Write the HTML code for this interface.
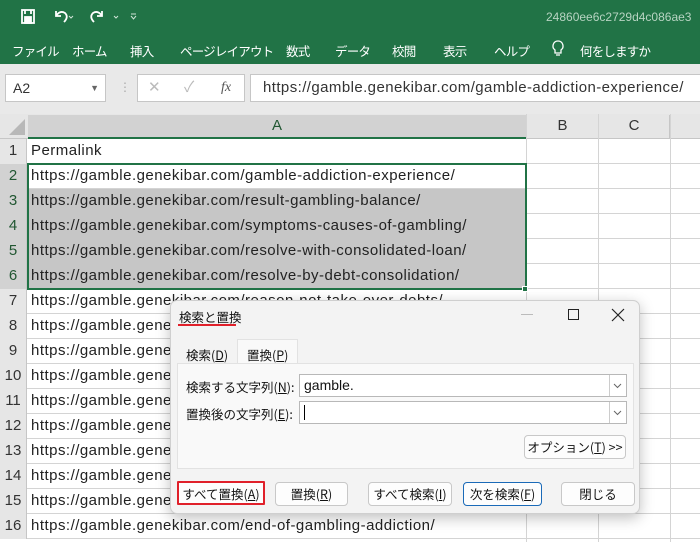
<!DOCTYPE html>
<html><head><meta charset="utf-8"><style>
*{margin:0;padding:0;box-sizing:border-box}
body{width:700px;height:542px;overflow:hidden;position:relative;background:#fff;font-family:"Liberation Sans","Noto Sans CJK JP",sans-serif}
.abs{position:absolute}
.menu span{position:absolute;top:41px;color:#fff;font-size:12.5px;letter-spacing:-0.8px;font-family:"Noto Sans CJK JP",sans-serif}
.row{position:absolute;left:0;width:700px;height:25px;border-bottom:1px solid #d4d4d4}
.rh{position:absolute;left:0;width:27px;height:25px;background:#e6e6e6;color:#333;font-size:15px;text-align:center;line-height:24px;border-right:1px solid #c6c6c6}
.cell{position:absolute;left:31px;top:0;font-size:15px;line-height:24px;color:#222;white-space:nowrap;letter-spacing:0.48px}
.vl{position:absolute;top:114px;width:1px;height:428px;background:#d4d4d4}
.btn{position:absolute;top:481px;height:24px;border:1px solid #c8c8c8;border-radius:4px;background:#fdfdfd;font-size:12.5px;text-align:center;line-height:22px;color:#111;font-family:"Noto Sans CJK JP",sans-serif}
.dlg{font-family:"Noto Sans CJK JP",sans-serif;color:#111}
</style></head><body>
<div class="abs" style="left:0;top:0;width:700px;height:64px;background:#217346"></div>
<svg class="abs" style="left:0;top:0" width="160" height="35">
<g stroke="#fff" fill="none" stroke-width="1.8">
<rect x="22" y="10" width="12" height="13"/><rect x="25" y="17" width="6" height="6" fill="#fff"/><line x1="25" y1="10" x2="25" y2="14"/><line x1="31" y1="10" x2="31" y2="14"/>
<path d="M56 11 v5 h5 M56 16 q4-6 9-3 q4 4 -1 9"/>
<path d="M102 11 v5 h-5 M102 16 q-4-6 -9-3 q-4 4 1 9"/>
</g>
<g stroke="#cfe3d6" fill="none" stroke-width="1"><path d="M69 16l2 2 2-2M114 16l2 2 2-2"/><path d="M131 14h5M131 16l2.5 3 2.5-3"/></g>
</svg>
<div class="abs" style="left:546px;top:10px;color:#b7d4c2;font-size:12px">24860ee6c2729d4c086ae3</div>
<div class="menu">
<span style="left:12px">ファイル</span><span style="left:72px">ホーム</span><span style="left:130px">挿入</span><span style="left:180px">ページレイアウト</span><span style="left:286px">数式</span><span style="left:335px">データ</span><span style="left:392px">校閲</span><span style="left:443px">表示</span><span style="left:494px">ヘルプ</span><span style="left:580px">何をしますか</span>
</div>
<svg class="abs" style="left:548px;top:38px" width="20" height="22"><path d="M10 3a5 5 0 0 0-3 9v3h6v-3a5 5 0 0 0-3-9zM8 17h4" stroke="#fff" fill="none" stroke-width="1.3"/></svg>
<div class="abs" style="left:0;top:64px;width:700px;height:50px;background:#e9e9e9"></div>
<div class="abs" style="left:5px;top:74px;width:101px;height:28px;background:#fff;border:1px solid #c6c6c6;font-size:14px;line-height:26px;padding-left:7px;color:#333">A2<span style="position:absolute;right:6px;top:0;font-size:9px;color:#666">▼</span></div>
<div class="abs" style="left:119px;top:80px;color:#aaa;font-size:12px">⋮</div>
<div class="abs" style="left:137px;top:74px;width:108px;height:28px;background:#fff;border:1px solid #c6c6c6;color:#bbb;font-size:15px;line-height:26px"><span style="position:absolute;left:10px">✕</span><span style="position:absolute;left:46px">✓</span><span style="position:absolute;left:83px;color:#555;font-style:italic;font-family:'Liberation Serif';font-size:14px">fx</span></div>
<div class="abs" style="left:250px;top:74px;width:460px;height:28px;background:#fff;border:1px solid #c6c6c6;font-size:15px;line-height:26px;padding-left:12px;color:#333;letter-spacing:0.42px;white-space:nowrap">https://gamble.genekibar.com/gamble-addiction-experience/</div>
<div class="abs" style="left:0;top:114px;width:700px;height:25px;background:#e6e6e6;border-bottom:1px solid #c6c6c6"></div>
<div class="abs" style="left:28px;top:115px;width:498px;height:24px;background:#d2d2d2;border-bottom:2px solid #217346;text-align:center;font-size:15px;line-height:22px;color:#215732">A</div>
<div class="abs" style="left:526px;top:115px;width:72px;height:23px;border-left:1px solid #c6c6c6;text-align:center;font-size:15px;line-height:22px;color:#333">B</div>
<div class="abs" style="left:598px;top:115px;width:72px;height:23px;border-left:1px solid #c6c6c6;border-right:1px solid #c6c6c6;text-align:center;font-size:15px;line-height:22px;color:#333">C</div>
<svg class="abs" style="left:8px;top:118px" width="18" height="18"><path d="M17 1V17H1Z" fill="#b8b8b8"/></svg>
<div class="vl" style="left:526px"></div><div class="vl" style="left:598px"></div><div class="vl" style="left:670px"></div>
<div class="row" style="top:139px"><div class="rh">1</div><div class="cell">Permalink</div></div>
<div class="row" style="top:164px"><div class="rh" style="background:#d2d2d2;color:#215732">2</div><div class="cell">https://gamble.genekibar.com/gamble-addiction-experience/</div></div>
<div class="row" style="top:189px"><div class="rh" style="background:#d2d2d2;color:#215732">3</div><div class="abs" style="left:28px;width:498px;height:25px;background:#c6c6c6"></div><div class="cell">https://gamble.genekibar.com/result-gambling-balance/</div></div>
<div class="row" style="top:214px"><div class="rh" style="background:#d2d2d2;color:#215732">4</div><div class="abs" style="left:28px;width:498px;height:25px;background:#c6c6c6"></div><div class="cell">https://gamble.genekibar.com/symptoms-causes-of-gambling/</div></div>
<div class="row" style="top:239px"><div class="rh" style="background:#d2d2d2;color:#215732">5</div><div class="abs" style="left:28px;width:498px;height:25px;background:#c6c6c6"></div><div class="cell">https://gamble.genekibar.com/resolve-with-consolidated-loan/</div></div>
<div class="row" style="top:264px"><div class="rh" style="background:#d2d2d2;color:#215732">6</div><div class="abs" style="left:28px;width:498px;height:25px;background:#c6c6c6"></div><div class="cell">https://gamble.genekibar.com/resolve-by-debt-consolidation/</div></div>
<div class="row" style="top:289px"><div class="rh">7</div><div class="cell">https://gamble.genekibar.com/reason-not-take-over-debts/</div></div>
<div class="row" style="top:314px"><div class="rh">8</div><div class="cell">https://gamble.genekibar.com/</div></div>
<div class="row" style="top:339px"><div class="rh">9</div><div class="cell">https://gamble.genekibar.com/</div></div>
<div class="row" style="top:364px"><div class="rh">10</div><div class="cell">https://gamble.genekibar.com/</div></div>
<div class="row" style="top:389px"><div class="rh">11</div><div class="cell">https://gamble.genekibar.com/</div></div>
<div class="row" style="top:414px"><div class="rh">12</div><div class="cell">https://gamble.genekibar.com/</div></div>
<div class="row" style="top:439px"><div class="rh">13</div><div class="cell">https://gamble.genekibar.com/</div></div>
<div class="row" style="top:464px"><div class="rh">14</div><div class="cell">https://gamble.genekibar.com/</div></div>
<div class="row" style="top:489px"><div class="rh">15</div><div class="cell">https://gamble.genekibar.com/</div></div>
<div class="row" style="top:514px"><div class="rh">16</div><div class="cell">https://gamble.genekibar.com/end-of-gambling-addiction/</div></div>
<div class="abs" style="left:27px;top:163px;width:500px;height:127px;border:2px solid #217346"></div>
<div class="abs" style="left:522px;top:286px;width:6px;height:6px;background:#217346;border:1px solid #fff"></div>
<div class="abs dlg" style="left:170px;top:300px;width:470px;height:214px;background:#f3f3f3;border:1px solid #cfcfcf;border-radius:7px;box-shadow:0 4px 14px rgba(0,0,0,.25)">
<div class="abs" style="left:8px;top:6px;font-size:12.5px">検索と置換</div>
<div class="abs" style="left:7px;top:23px;width:58px;height:2px;background:#e0202a"></div>
<div class="abs" style="left:350px;top:13px;width:12px;height:1px;background:#bbb"></div>
<div class="abs" style="left:397px;top:8px;width:11px;height:11px;border:1.3px solid #222"></div>
<svg class="abs" style="left:440px;top:7px" width="14" height="14"><path d="M1 1L13 13M13 1L1 13" stroke="#222" stroke-width="1.2"/></svg>
<div class="abs" style="left:15px;top:44px;font-size:12.5px">検索(<u>D</u>)</div>
<div class="abs" style="left:66px;top:38px;width:61px;height:26px;background:#f9f9f9;border:1px solid #e2e2e2;border-bottom:none;font-size:12.5px;padding:5px 0 0 9px">置換(<u>P</u>)</div>
<div class="abs" style="left:6px;top:62px;width:457px;height:106px;background:#f9f9f9;border:1px solid #e2e2e2"></div>
<div class="abs" style="left:15px;top:76px;font-size:12.5px">検索する文字列(<u>N</u>):</div>
<div class="abs" style="left:15px;top:103px;font-size:12.5px">置換後の文字列(<u>E</u>):</div>
<div class="abs" style="left:128px;top:73px;width:328px;height:23px;background:#fff;border:1px solid #b8b8b8;font-family:'Liberation Sans';font-size:14px;padding:2px 0 0 4px">gamble.</div>
<div class="abs" style="left:128px;top:100px;width:328px;height:23px;background:#fff;border:1px solid #b8b8b8"><div class="abs" style="left:4px;top:3px;width:1px;height:15px;background:#000"></div></div>
<svg class="abs" style="left:438px;top:74px" width="17" height="48"><g stroke="#ccc"><line x1=".5" y1="0" x2=".5" y2="21"/><line x1=".5" y1="27" x2=".5" y2="48"/></g><path d="M5 9l3.5 3.5L12 9M5 36l3.5 3.5L12 36" stroke="#666" fill="none"/></svg>
<div class="btn" style="left:353px;top:134px;width:102px">オプション(<u>T</u>) &gt;&gt;</div>
<div class="btn" style="left:6px;top:180px;width:88px;border:2px solid #e0202a;border-radius:1px">すべて置換(<u>A</u>)</div>
<div class="btn" style="left:104px;top:181px;width:73px">置換(<u>R</u>)</div>
<div class="btn" style="left:197px;top:181px;width:84px">すべて検索(<u>I</u>)</div>
<div class="btn" style="left:292px;top:181px;width:79px;border-color:#1a6ab8">次を検索(<u>F</u>)</div>
<div class="btn" style="left:390px;top:181px;width:74px">閉じる</div>
</div>
</body></html>
